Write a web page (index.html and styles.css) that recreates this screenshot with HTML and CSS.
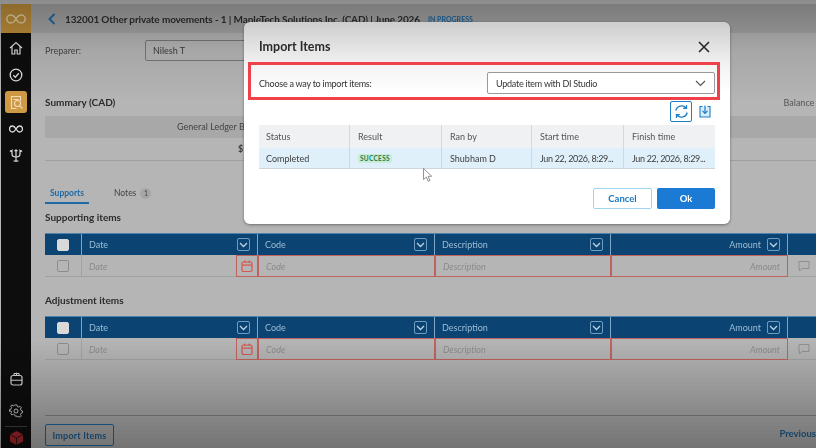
FILE: index.html
```html
<!DOCTYPE html>
<html>
<head>
    <title>Import Items</title>
    <link rel="stylesheet" href="styles.css">
</head>
<body>
<svg class="defs" width="0" height="0">
  <symbol id="caret-box" viewBox="0 0 13 13">
    <rect x="0.5" y="0.5" width="12" height="12" rx="1.5" fill="none" stroke="#6f9dc2"/>
    <path d="M3 5l3.5 3.5L10 5" fill="none" stroke="#b9d2e4" stroke-width="1.3"/>
  </symbol>
  <symbol id="calendar" viewBox="0 0 14 14">
    <rect x="2" y="3" width="10" height="9.5" rx="1.5" fill="none" stroke="#d4564f" stroke-width="1.2"/>
    <path d="M2 6.2h10M4.8 1.5v2.5M9.2 1.5v2.5" fill="none" stroke="#d4564f" stroke-width="1.2"/>
  </symbol>
  <symbol id="comment" viewBox="0 0 12 12">
    <path d="M1 1.5h10v7H4L1.5 11V8.5H1z" fill="none" stroke="#8f8f8f"/>
  </symbol>
</svg>

<div class="top-strip"></div>
<div class="app">
  <aside class="sidebar">
    <div class="logo">
      <svg width="20" height="10" viewBox="0 0 20 10"><path d="M10 5C8 1.5 6.5 1 4.800 1a4 4 0 0 0 0 8c1.700 0 3.200-.5 5.200-4zm0 0c2-3.500 3.500-4 5.200-4a4 4 0 0 1 0 8c-1.700 0-3.200-.5-5.200-4z" fill="none" stroke="#e6d3a8" stroke-width="1.500"/></svg>
    </div>
    <nav class="side-nav">
      <a class="side-item"><svg width="14" height="14" viewBox="0 0 14 14"><path d="M1 7l6-5.500L13 7M3 5.500V13h2.800V9h2.400v4H11V5.500" fill="none" stroke="#ddd" stroke-width="1.200"/></svg></a>
      <a class="side-item"><svg width="14" height="14" viewBox="0 0 14 14"><circle cx="7" cy="7" r="5.800" fill="none" stroke="#ddd" stroke-width="1.300"/><path d="M4.300 7.200l2 2 3.500-4" fill="none" stroke="#ddd" stroke-width="1.300"/></svg></a>
      <a class="side-item active"><svg width="15" height="15" viewBox="0 0 15 15"><path d="M11.500 6V1.500h-9v12h5" fill="none" stroke="#f0dcb8" stroke-width="1.100"/><circle cx="8.500" cy="8.500" r="3" fill="none" stroke="#f0dcb8" stroke-width="1.100"/><path d="M10.800 10.800L13.500 13.500M4.500 4.500h5" fill="none" stroke="#f0dcb8" stroke-width="1.100"/></svg></a>
      <a class="side-item"><svg width="14" height="8" viewBox="0 0 14 8"><path d="M7 4C5.500 1.500 4.500 1 3.500 1a3 3 0 0 0 0 6c1 0 2-.5 3.500-3zm0 0c1.500-2.500 2.500-3 3.500-3a3 3 0 0 1 0 6c-1 0-2-.5-3.500-3z" fill="none" stroke="#ddd" stroke-width="1.300"/></svg></a>
      <a class="side-item"><svg width="14" height="14" viewBox="0 0 14 14"><path d="M1 1.500l1 1 1-1V5c0 2 1.500 3 4 3s4-1 4-3V1.500l1 1 1-1M7 1v12M4.500 12h5M5.500 2L7 1l1.500 1" fill="none" stroke="#ddd" stroke-width="1.200"/></svg></a>
    </nav>
    <div class="side-bottom">
      <a class="side-item"><svg width="13" height="14" viewBox="0 0 13 14"><rect x="1" y="3.500" width="11" height="9.500" rx="2" fill="none" stroke="#ddd" stroke-width="1.200"/><path d="M1 8.200h11M4 3.500V1.500M6.500 3.500V.800M9 3.500V1.500M4 1.500h5" fill="none" stroke="#ddd" stroke-width="1.100"/></svg></a>
      <a class="side-item gear"><svg width="14" height="14" viewBox="0 0 14 14"><circle cx="7" cy="7" r="2" fill="none" stroke="#ddd"/><path d="M6 1h2l.4 1.700 1.500.7 1.500-.9 1.300 1.400-.9 1.500.6 1.600 1.600.5v1.900l-1.600.5-.6 1.500.9 1.500-1.300 1.400-1.500-.9-1.500.6L8 13H6l-.4-1.500-1.500-.6-1.500.9-1.300-1.400.9-1.500-.6-1.500L0 7.900V6l1.600-.5.600-1.600-.9-1.500L2.600 1l1.500.9 1.500-.7z" transform="translate(.5 0) scale(.93)" fill="none" stroke="#ddd"/></svg></a>
      <div class="side-sep"></div>
      <a class="side-item cube"><svg width="13" height="14" viewBox="0 0 13 14"><path d="M6.500 0L13 3.500v7L6.500 14 0 10.500v-7z" fill="#a8282b"/><path d="M0 3.500l6.500 3.500L13 3.500M6.500 7v7" fill="none" stroke="#1a0a0a" stroke-width=".8"/></svg></a>
    </div>
  </aside>

  <main class="main">
    <header class="page-head">
      <svg class="back" width="8" height="12" viewBox="0 0 8 12"><path d="M6.500 1L1.500 6l5 5" fill="none" stroke="#1f6aa5" stroke-width="1.800"/></svg>
      <h1 class="page-title">132001 Other private movements - 1 | MapleTech Solutions Inc. (CAD) | June 2026</h1>
      <span class="page-status">IN PROGRESS</span>
    </header>

    <div class="content">
      <div class="preparer">
        <span class="preparer-label">Preparer:</span>
        <div class="preparer-input">Nilesh T</div>
      </div>

      <div class="summary-title">
        <h2 class="section-title">Summary (CAD)</h2>
        <span class="balance">Balance Difference</span>
      </div>
      <div class="summary-head">General Ledger Balance</div>
      <div class="summary-row">$</div>

      <div class="tabs">
        <a class="tab current">Supports</a>
        <a class="tab">Notes <span class="tab-count">1</span></a>
      </div>

      <h2 class="section-title items-title">Supporting items</h2>
      <div class="items">
        <div class="items-row items-head">
          <div class="cell"><span class="check light"></span></div>
          <div class="cell">Date<svg class="caret"><use href="#caret-box"/></svg></div>
          <div class="cell">Code<svg class="caret"><use href="#caret-box"/></svg></div>
          <div class="cell">Description<svg class="caret"><use href="#caret-box"/></svg></div>
          <div class="cell end">Amount<svg class="caret"><use href="#caret-box"/></svg></div>
          <div class="cell"></div>
        </div>
        <div class="items-row items-input">
          <div class="cell"><span class="check"></span></div>
          <div class="cell date">Date<span class="cal"><svg width="14" height="14"><use href="#calendar"/></svg></span></div>
          <div class="cell bad">Code</div>
          <div class="cell bad">Description</div>
          <div class="cell bad end">Amount</div>
          <div class="cell"><svg width="12" height="12"><use href="#comment"/></svg></div>
        </div>
      </div>

      <h2 class="section-title items-title adjust">Adjustment items</h2>
      <div class="items">
        <div class="items-row items-head">
          <div class="cell"><span class="check light"></span></div>
          <div class="cell">Date<svg class="caret"><use href="#caret-box"/></svg></div>
          <div class="cell">Code<svg class="caret"><use href="#caret-box"/></svg></div>
          <div class="cell">Description<svg class="caret"><use href="#caret-box"/></svg></div>
          <div class="cell end">Amount<svg class="caret"><use href="#caret-box"/></svg></div>
          <div class="cell"></div>
        </div>
        <div class="items-row items-input">
          <div class="cell"><span class="check"></span></div>
          <div class="cell date">Date<span class="cal"><svg width="14" height="14"><use href="#calendar"/></svg></span></div>
          <div class="cell bad">Code</div>
          <div class="cell bad">Description</div>
          <div class="cell bad end">Amount</div>
          <div class="cell"><svg width="12" height="12"><use href="#comment"/></svg></div>
        </div>
      </div>
    </div>

    <footer class="page-foot">
      <button class="import-btn">Import Items</button>
      <a class="prev-link">Previous</a>
    </footer>
  </main>
</div>

<div class="shade"></div>

<div class="modal">
  <div class="modal-head">
    <h2 class="modal-title">Import Items</h2>
    <svg width="12" height="12" viewBox="0 0 12 12"><path d="M1 1l10 10M11 1L1 11" stroke="#222" stroke-width="1.500"/></svg>
  </div>
  <div class="choose">
    <label class="choose-label">Choose a way to import items:</label>
    <div class="choose-select">
      <span>Update item with DI Studio</span>
      <svg width="11" height="7" viewBox="0 0 11 7"><path d="M1 1l4.500 4.500L10 1" fill="none" stroke="#555" stroke-width="1.200"/></svg>
    </div>
  </div>
  <div class="tools">
    <a class="tool boxed"><svg width="15" height="15" viewBox="0 0 15 15"><path d="M1.800 6.500A5.800 5.800 0 0 1 12 4M13.200 8.500A5.800 5.800 0 0 1 3 11M12.500 1v3.300H9.200M2.500 14v-3.300h3.300" fill="none" stroke="#1f7fc4" stroke-width="1.300"/></svg></a>
    <a class="tool"><svg width="12" height="13" viewBox="0 0 12 13"><path d="M3.500 1.500H1v10.500h10V1.500H8.500" fill="#d8ecfa" stroke="#1f7fc4" stroke-width="1.100"/><path d="M6 .5v7.500M3.500 5.800L6 8.300l2.500-2.500" fill="none" stroke="#1f7fc4" stroke-width="1.200"/></svg></a>
  </div>
  <div class="runs">
    <div class="runs-row runs-head">
      <div class="run-cell">Status</div>
      <div class="run-cell">Result</div>
      <div class="run-cell">Ran by</div>
      <div class="run-cell">Start time</div>
      <div class="run-cell">Finish time</div>
    </div>
    <div class="runs-row runs-body">
      <div class="run-cell">Completed</div>
      <div class="run-cell"><span class="badge">SUCCESS</span></div>
      <div class="run-cell">Shubham D</div>
      <div class="run-cell run-time">Jun 22, 2026, 8:29...</div>
      <div class="run-cell run-time">Jun 22, 2026, 8:29...</div>
    </div>
  </div>
  <div class="modal-foot">
    <button class="btn-cancel">Cancel</button>
    <button class="btn-ok">Ok</button>
  </div>
</div>

<svg class="pointer" width="10" height="14" viewBox="0 0 10 14"><path d="M.5.500v11l2.800-2.400 1.900 4.200 1.800-.8-1.900-4.100 3.600-.2z" fill="#fff" stroke="#777" stroke-width=".8"/></svg>
</body>
</html>
```

FILE: styles.css
```css
* {
  box-sizing: border-box;
}
html, body {
  margin: 0;
  height: 100%;
  overflow: hidden;
}
body {
  font-family: Lato, "Liberation Sans", sans-serif;
  font-size: 9px;
  color: #3a3a3a;
  background-color: #b5b5b5;
  position: relative;
  filter: blur(.35px);
}
h1, h2 {
  margin: 0;
}
.defs {
  position: absolute;
}
.top-strip {
  height: 4px;
  background-color: #c2c2c2;
}
.app {
  display: flex;
  height: 444px;
  padding-left: 1px;
}

/* sidebar */
.sidebar {
  width: 30px;
  flex: none;
  background-color: #0d0d0d;
  display: flex;
  flex-direction: column;
}
.logo {
  height: 29px;
  background-color: #c08f3a;
  display: flex;
  align-items: center;
  justify-content: center;
}
.side-nav {
  padding-top: 1px;
  display: flex;
  flex-direction: column;
  align-items: center;
}
.side-item {
  width: 22px;
  height: 26px;
  display: flex;
  align-items: center;
  justify-content: center;
  margin-top: 1px;
}
.side-item.active {
  height: 22px;
  margin: 3px 0 2px;
  border-radius: 3px;
  background-color: #cf9a45;
}
.side-bottom {
  margin-top: auto;
  display: flex;
  flex-direction: column;
  align-items: center;
}
.side-item.gear {
  height: 30px;
  margin-top: 4px;
}
.side-sep {
  width: 22px;
  height: 1px;
  background-color: #444;
}
.side-item.cube {
  height: 21px;
  margin-top: 0;
}

/* page */
.main {
  flex: 1;
  min-width: 0;
  display: flex;
  flex-direction: column;
  overflow: hidden;
}
.page-head {
  height: 29px;
  flex: none;
  background-color: #a6a6a6;
  padding-left: 17px;
  display: flex;
  align-items: center;
  white-space: nowrap;
}
.page-title {
  margin-left: 9px;
  font-size: 10px;
  font-weight: 700;
  letter-spacing: -.125px;
  color: #2d2d2d;
}
.page-status {
  margin-left: 8px;
  font-size: 7px;
  font-weight: 700;
  color: #1f6aa5;
}
.content {
  padding-left: 14px;
  width: 827px;
}
.preparer {
  display: flex;
  align-items: center;
  height: 21px;
  margin-top: 7px;
}
.preparer-label {
  width: 100px;
  font-size: 9px;
  color: #444;
}
.preparer-input {
  width: 190px;
  height: 21px;
  padding: 0 7px;
  line-height: 19px;
  font-size: 9px;
  border: 1px solid #777;
  border-radius: 2px;
}
.section-title {
  font-size: 10px;
  font-weight: 700;
  color: #2b2b2b;
}
.summary-title {
  display: flex;
  justify-content: space-between;
  align-items: center;
  height: 16px;
  margin-top: 33px;
}
.balance {
  font-size: 9px;
  color: #555;
}
.summary-head {
  height: 22px;
  margin-top: 6px;
  padding-left: 132px;
  line-height: 22px;
  background-color: #a8a8a8;
  color: #444;
}
.summary-row {
  height: 23px;
  padding-left: 193px;
  line-height: 21px;
  font-weight: 700;
  border-bottom: 1px solid #a0a0a0;
}
.tabs {
  display: flex;
  height: 20px;
  margin-top: 23px;
  gap: 25px;
}
.tab {
  font-size: 8.500px;
  line-height: 18px;
  color: #444;
}
.tab.current {
  width: 44px;
  text-align: center;
  font-weight: 700;
  color: #1f6aa5;
  border-bottom: 2px solid #1f6aa5;
}
.tab-count {
  display: inline-block;
  width: 11px;
  height: 11px;
  margin-left: 2px;
  border-radius: 50%;
  line-height: 11px;
  font-size: 7px;
  text-align: center;
  background-color: #a6a6a6;
}
.items-title {
  height: 14px;
  line-height: 14px;
  margin: 6px 0 9px;
}
.items-title.adjust {
  margin: 16px 0 9px;
}

/* items tables */
.items-row {
  display: grid;
  grid-template-columns: 37px 176px 177px 176px 177px 1fr;
  height: 22px;
}
.cell {
  display: flex;
  align-items: center;
  justify-content: space-between;
  padding: 0 7px;
  position: relative;
}
.items-head {
  background-color: #0b4472;
  border-top: 1px solid #4d83ad;
  color: #9dbdd6;
}
.items-head .cell {
  border-right: 1px solid #7ea5c4;
  font-size: 9px;
}
.items-head .cell:first-child {
  justify-content: center;
}
.items-head .cell:last-child {
  border-right: none;
}
.cell.end {
  justify-content: flex-end;
  gap: 6px;
}
.caret {
  width: 13px;
  height: 13px;
  flex: none;
}
.items-input {
  border-bottom: 1px solid #a2a2a2;
  color: #8a8a8a;
  font-style: italic;
  font-size: 9px;
}
.items-input .cell:first-child {
  justify-content: center;
  border-right: 1px solid #a2a2a2;
}
.items-input .cell:last-child {
  padding-left: 10px;
}
.cell.bad {
  border: 1px solid #c0625c;
}
.cell.date {
  padding-right: 0;
}
.cal {
  width: 22px;
  height: 22px;
  display: flex;
  align-items: center;
  justify-content: center;
  border: 1px solid #c0625c;
}
.check {
  width: 12px;
  height: 12px;
  border: 1px solid #8c8c8c;
  border-radius: 2px;
}
.check.light {
  background-color: #d9d9d9;
  border-color: #d9d9d9;
}
.page-foot {
  flex: none;
  margin-top: auto;
  height: 33px;
  margin-left: 14px;
  padding: 8px 0 0;
  border-top: 1px solid #8a8a8a;
  display: flex;
  justify-content: space-between;
  align-items: flex-start;
}
.import-btn {
  width: 69px;
  height: 22px;
  padding: 0;
  font-family: inherit;
  font-size: 9px;
  font-weight: 700;
  letter-spacing: .2px;
  color: #1f5f94;
  background: none;
  border: 1px solid #1f6aa5;
  border-radius: 2px;
}
.prev-link {
  margin-top: 4px;
  font-size: 9.500px;
  font-weight: 700;
  color: #1f5f94;
}

/* video darkening over the whole page */
.shade {
  position: absolute;
  inset: 0;
  background: linear-gradient(to bottom, rgba(0,0,0,.28) 0, rgba(0,0,0,.08) 50px, rgba(0,0,0,0) 100px, rgba(0,0,0,0) 340px, rgba(0,0,0,.36) 100%);
}

/* dialog */
.modal {
  position: absolute;
  left: 244px;
  top: 22px;
  width: 486px;
  height: 202px;
  border-radius: 6px;
  background: linear-gradient(to bottom, #cdcdcd 0, #f4f4f4 45px, #fff 70px);
  box-shadow: 0 1px 3px rgba(0,0,0,.4);
}
.modal-head {
  height: 40px;
  padding: 9px 20px 0 15px;
  display: flex;
  align-items: center;
  justify-content: space-between;
}
.modal-title {
  font-size: 12.500px;
  font-weight: 700;
  color: #2a2a2a;
}
.choose {
  margin: 0 10px 0 4px;
  height: 38px;
  padding: 4px 2px 0 8px;
  border: 3px solid #f0414a;
  display: flex;
  align-items: center;
  justify-content: space-between;
}
.choose-label {
  font-size: 9px;
  letter-spacing: -.25px;
  color: #333;
}
.choose-select {
  width: 228px;
  height: 22px;
  padding: 0 8px;
  display: flex;
  align-items: center;
  justify-content: space-between;
  font-size: 9px;
  letter-spacing: -.25px;
  color: #333;
  background-color: #fff;
  border: 1px solid #999;
  border-radius: 2px;
}
.tools {
  height: 25px;
  padding: 1px 19px 0 0;
  display: flex;
  justify-content: flex-end;
  align-items: flex-start;
  gap: 7px;
}
.tool {
  height: 21px;
  display: flex;
  align-items: center;
  justify-content: center;
}
.tool.boxed {
  width: 22px;
  border: 1px solid #1f7fc4;
  border-radius: 2px;
}
.runs {
  margin: 0 15px;
}
.runs-row {
  display: grid;
  grid-template-columns: 91px 92px 90px 92px 1fr;
}
.run-cell {
  padding-left: 8px;
  font-size: 9px;
  color: #3d3d3d;
  white-space: nowrap;
  overflow: hidden;
  display: flex;
  align-items: center;
  border-right: 1px solid #d4d8dc;
}
.run-cell:first-child {
  padding-left: 7px;
}
.run-cell:last-child {
  border-right: none;
}
.run-cell.run-time {
  letter-spacing: -.33px;
}
.runs-head {
  height: 23px;
  background-color: #f0f1f2;
}
.runs-head .run-cell {
  color: #555;
}
.runs-body {
  height: 21px;
  background-color: #e0f0fb;
  border-bottom: 1px solid #cfd6dc;
}
.badge {
  padding: 1px 2px;
  font-size: 6.500px;
  font-weight: 700;
  letter-spacing: .3px;
  color: #1e7d4a;
  background-color: #c9ecd9;
  border-radius: 2px;
}
.modal-foot {
  margin-top: 19px;
  padding-right: 15px;
  display: flex;
  justify-content: flex-end;
  gap: 5px;
}
.modal-foot button {
  height: 21px;
  padding: 0;
  font-family: inherit;
  font-size: 9.500px;
  font-weight: 700;
  border-radius: 2px;
}
.btn-cancel {
  width: 59px;
  color: #1a78c2;
  background-color: #fff;
  border: 1px solid #9ed4f0;
}
.btn-ok {
  width: 58px;
  color: #fff;
  background-color: #1a7ad4;
  border: none;
}
.pointer {
  position: absolute;
  left: 423px;
  top: 168px;
}
```
